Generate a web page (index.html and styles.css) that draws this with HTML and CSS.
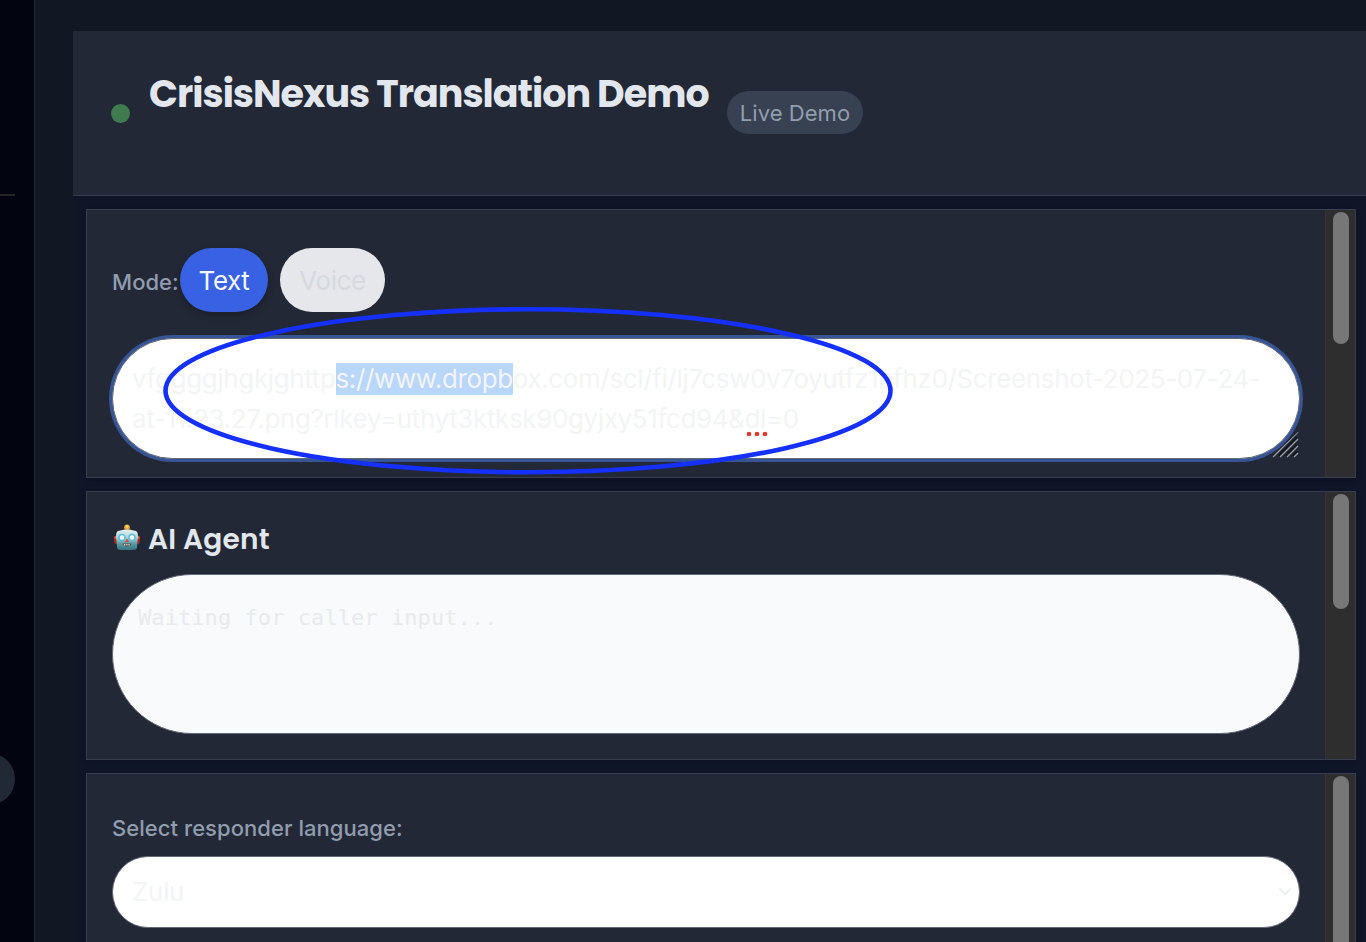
FILE: index.html
```html
<!DOCTYPE html>
<html lang="en">
<head>
<meta charset="utf-8">
<title>CrisisNexus Translation Demo</title>
<link rel="stylesheet" href="styles.css">
</head>
<body>
<div class="app">
  <aside class="sidebar">
    <div class="sidebar-rule"></div>
    <div class="sidebar-toggle"></div>
  </aside>
  <main class="main">
    <header class="header">
      <span class="status"></span>
      <h1 class="title">CrisisNexus Translation Demo</h1>
      <span class="badge">Live Demo</span>
    </header>
    <div class="panels">
      <section class="card">
        <div class="content content-mode">
          <div class="modes">
            <span class="label">Mode:</span>
            <button class="btn btn-active">Text</button>
            <button class="btn btn-idle">Voice</button>
          </div>
          <div class="input">
            <div class="line">vfggggjhgkjghttp<mark>s://www.dropb</mark>ox.com/scl/fi/lj7csw0v7oyutfz1nfhz0/Screenshot-2025-07-24-</div>
            <div class="line">at-11.23.27.png?rlkey=uthyt3ktksk90gyjxy51fcd94&amp;<span class="typo">dl<svg class="dots" width="24" height="6" viewBox="0 0 24 6"><circle cx="3" cy="3" r="2.3"/><circle cx="11" cy="3" r="2.3"/><circle cx="19" cy="3" r="2.3"/></svg></span>=0</div>
            <svg class="grip" width="28" height="28" viewBox="0 0 28 28"><path class="grip-dark" d="M1 25 26 0M8 25 26 7M15 25 26 14M22 25 26 21"/><path class="grip-light" d="M2 26 27 1M9 26 27 8M16 26 27 15M23 26 27 22"/></svg>
          </div>
        </div>
        <div class="track"><div class="thumb thumb-one"></div></div>
      </section>
      <section class="card">
        <div class="content content-agent">
          <h2 class="subtitle">
            <svg class="robot" width="28" height="28" viewBox="0 0 28 28">
              <defs><linearGradient id="face" x1="0" y1="0" x2="0" y2="1"><stop offset="0" stop-color="#e4f3f0"/><stop offset=".4" stop-color="#acd2d3"/><stop offset=".7" stop-color="#5b98a2"/><stop offset="1" stop-color="#347681"/></linearGradient></defs>
              <rect x="1" y="12" width="5" height="8" rx="2" fill="#9c2724"/><rect x="22" y="12" width="5" height="8" rx="2" fill="#9c2724"/>
              <rect x="1.5" y="12" width="3" height="3" rx="1" fill="#e85a4d"/><rect x="23.5" y="12" width="3" height="3" rx="1" fill="#e85a4d"/>
              <ellipse cx="14" cy="6" rx="4" ry="2" fill="#67506e"/><ellipse cx="14" cy="3.2" rx="2.8" ry="2.6" fill="#f2a62b"/><circle cx="14" cy="2.4" r="1.2" fill="#ffe079"/>
              <path d="M5 7Q14 4 23 7Q25 8 25 12L24 24Q23 26 20 26H8Q4 26 4 23L3 12Q3 8 5 7Z" fill="url(#face)"/>
              <circle cx="9" cy="13.5" r="3" fill="#fff" stroke="#55bfd7" stroke-width="1.5"/><circle cx="19" cy="13.5" r="3" fill="#fff" stroke="#55bfd7" stroke-width="1.5"/>
              <path d="M14 14.5 16.3 18H11.7Z" fill="#d84c46"/><path d="M9.5 19.5H18.5Q18 22.5 14 22.5T9.5 19.5Z" fill="#4a5457"/><path d="M11 20.8H17" stroke="#eee3bd" stroke-width="1.5" stroke-dasharray="1.2 1"/>
            </svg>
            <span class="subtitle-text">AI Agent</span>
          </h2>
          <div class="output">Waiting for caller input...</div>
        </div>
        <div class="track"><div class="thumb thumb-two"></div></div>
      </section>
      <section class="card">
        <div class="content content-language">
          <span class="label">Select responder language:</span>
          <div class="select"><span>Zulu</span><svg width="14" height="10" viewBox="0 0 14 10"><path d="M1.5 1.5 7 7.3 12.5 1.5" fill="none" stroke="#eceef0" stroke-width="2"/></svg></div>
        </div>
        <div class="track"><div class="thumb thumb-three"></div></div>
      </section>
    </div>
  </main>
</div>
<svg class="annotation" width="734" height="172" viewBox="0 0 734 172"><ellipse cx="367" cy="85.8" rx="362.5" ry="81.5"/></svg>
</body>
</html>
```
FILE: styles.css
```css
* { box-sizing: border-box; }
body { margin: 0; background: #111824; font-family: Inter, "Liberation Sans", sans-serif; overflow: hidden; }
.app { display: flex; width: 1366px; height: 942px; overflow: hidden; }
.sidebar { flex: none; width: 35px; background: #02040f; border-right: 1px solid #1f2733; padding-top: 194px; overflow: hidden; }
.sidebar-rule { width: 15px; height: 2px; background: #262626; }
.sidebar-toggle { width: 52px; height: 52px; margin: 557px 0 0 -37px; border-radius: 50%; background: #212936; }
.main { flex: 1; min-width: 0; padding: 31px 0 0 38px; }
.header { display: flex; height: 165px; padding-left: 38px; background: #222835; border-bottom: 1px solid #373f4e; }
.status { width: 19px; height: 19px; margin-top: 73px; border-radius: 50%; background: #3f7b4f; }
.title { width: 560px; margin: 40px 0 0 19px; font: 700 38px/46px Poppins, Inter, sans-serif; letter-spacing: -1px; color: #e2e7ef; white-space: nowrap; }
.badge { width: 136px; height: 43px; margin: 60px 0 0 18px; border-radius: 22px; background: #374152; color: #929dae; font-size: 22px; line-height: 44px; letter-spacing: .05px; text-align: center; white-space: nowrap; }
.panels { display: grid; grid-template-rows: 269px 269px 269px; gap: 13px; padding: 13px 10px 0 13px; background: #101528; height: 746px; overflow: hidden; }
.card { display: flex; border: 1px solid #373e4d; background: #222835; box-shadow: 0 3px 6px rgba(0,0,0,.15); overflow: hidden; }
.content { flex: 1; min-width: 0; padding: 0 25px; }
.content-mode { padding-top: 38px; }
.content-agent { padding-top: 32px; }
.content-language { padding-top: 40px; }
.track { flex: none; width: 30px; padding: 2px 6px 0 8px; background: #2e2e2e; border-left: 1px solid #343434; }
.thumb { width: 16px; margin-left: -1px; border-radius: 8px; background: #777; }
.thumb-one { height: 132px; }
.thumb-two { height: 115px; }
.thumb-three { height: 260px; }
.modes { display: flex; height: 64px; }
.label { font-size: 22px; font-weight: 500; line-height: 28px; letter-spacing: .05px; color: #919caf; white-space: nowrap; }
.modes .label { width: 68px; padding-top: 20px; }
.btn { border: 0; height: 64px; padding: 2px 0 0; border-radius: 32px; font: 400 26px/62px Inter, sans-serif; letter-spacing: -.4px; text-align: center; }
.btn-active { width: 88px; background: #3862e3; color: #f4f7fd; box-shadow: 0 3px 6px rgba(0,0,0,.25); }
.btn-idle { width: 105px; margin-left: 12px; background: #e5e7eb; color: #d6d9de; }
.input { position: relative; z-index: 0; height: 121px; margin-top: 26px; padding: 20px 19px; border: 1px solid #626976; border-radius: 61px; background: #fff; box-shadow: 0 0 0 3px #375495; color: #f3f4f6; font-size: 26px; line-height: 40px; letter-spacing: -.37px; white-space: nowrap; }
.line { height: 40px; }
.line mark { padding-bottom: 1px; background: #b9d6fb; color: #f3f4f6; }
.typo { position: relative; }
.dots { position: absolute; left: 1px; bottom: -3px; fill: #e8372c; }
.grip { position: absolute; right: 0; bottom: -1px; z-index: 1; fill: none; stroke-width: 1.4; clip-path: polygon(100% 0, 100% 100%, 0 100%, 10% 82%, 45% 52%, 83% 16%); }
.grip-dark { stroke: #11151c; stroke-width: 2.5; }
.grip-light { stroke: #9b9fa5; }
.subtitle { display: flex; align-items: center; height: 30px; margin: 0; color: #e2e7ef; font: 600 28px/30px Poppins, Inter, sans-serif; letter-spacing: .2px; white-space: nowrap; }
.robot { margin: -2px 0 0 1px; }
.subtitle-text { margin: 1px 0 0 7px; }
.output { height: 160px; margin-top: 20px; padding: 28px 25px; border: 1px solid #626976; border-radius: 80px; background: #f9fafc; color: #e8eaed; font: 22px/30px "DejaVu Sans Mono", monospace; letter-spacing: .07px; }
.content-language .label { display: block; }
.select { display: flex; align-items: center; justify-content: space-between; height: 72px; margin-top: 14px; padding: 0 7px 0 19px; border: 1px solid #626976; border-radius: 36px; background: #fff; color: #f3f4f6; font-size: 26px; letter-spacing: -.3px; }
.select span { margin-top: -2px; }
.annotation { position: absolute; left: 161px; top: 305px; z-index: 3; fill: none; stroke: #1430fa; stroke-width: 4.6; }
```
